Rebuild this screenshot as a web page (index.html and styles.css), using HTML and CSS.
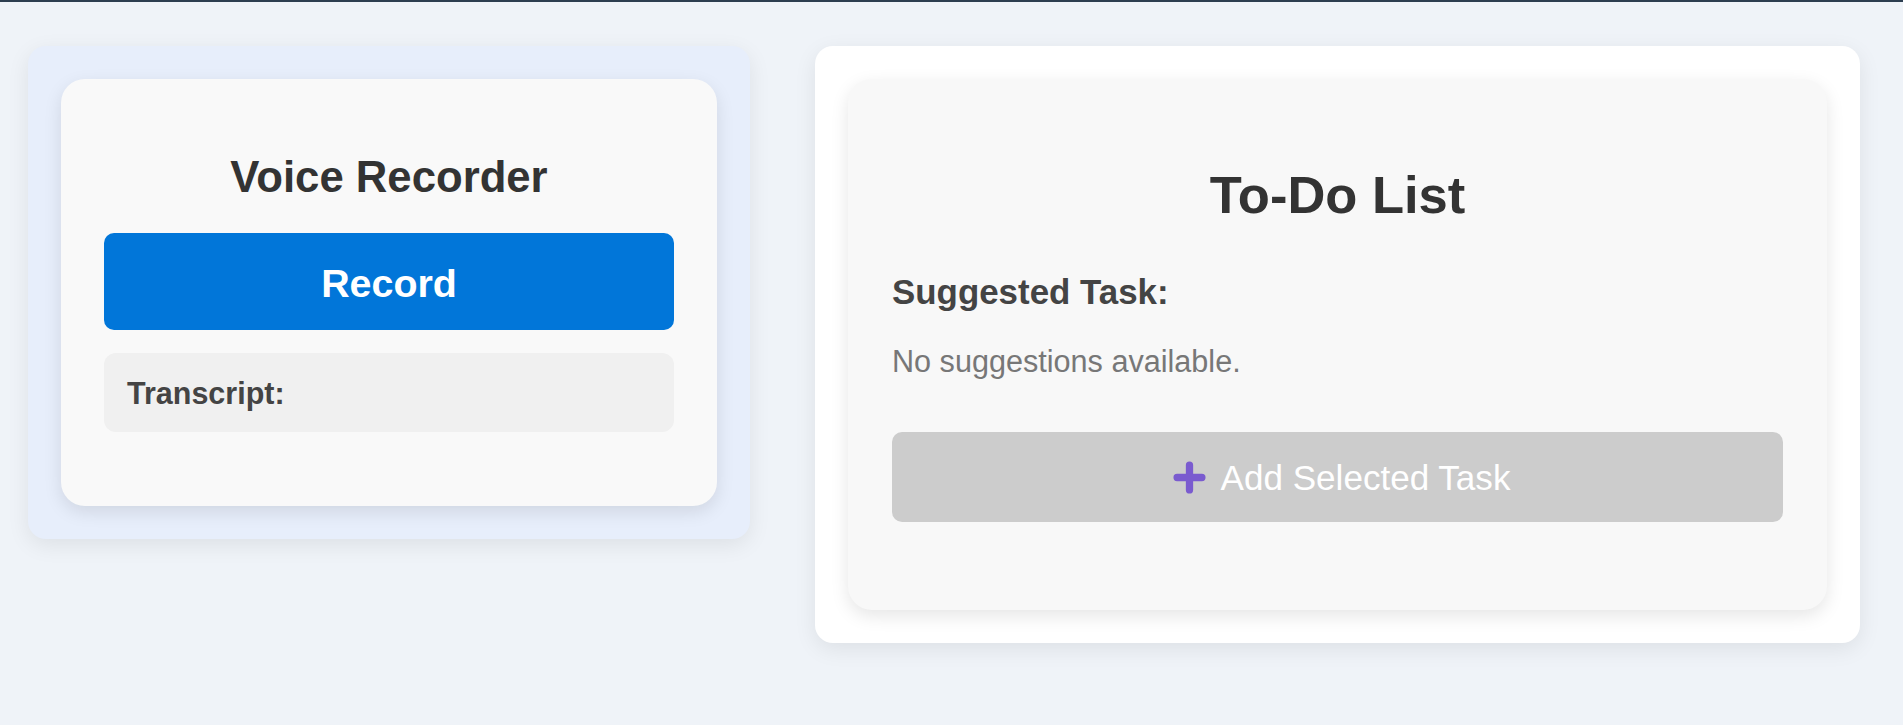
FILE: index.html
```html
<!DOCTYPE html>
<html lang="en">
<head>
<meta charset="utf-8">
<title>Voice Recorder &amp; To-Do List</title>
<link rel="stylesheet" href="styles.css">
</head>
<body>
<div class="topbar"></div>
<main class="main">
  <section class="panel panel-recorder">
    <div class="card">
      <h2 class="card-title">Voice Recorder</h2>
      <button class="btn-record" type="button">Record</button>
      <div class="transcript"><strong>Transcript:</strong></div>
    </div>
  </section>
  <section class="panel panel-todo">
    <div class="card card-todo">
      <h2 class="todo-title">To-Do List</h2>
      <h3 class="suggest-title">Suggested Task:</h3>
      <p class="suggest-empty">No suggestions available.</p>
      <button class="btn-add" type="button" disabled>
        <svg class="plus" viewBox="0 0 24 24" width="35" height="35" aria-hidden="true"><path d="M12 3.5v17M3.5 12h17" fill="none" stroke="#7a5bcf" stroke-width="5" stroke-linecap="round"/></svg>
        <span>Add Selected Task</span>
      </button>
    </div>
  </section>
</main>
</body>
</html>
```

FILE: styles.css
```css
* { box-sizing: border-box; }

body {
  margin: 0;
  background: #eff3f8;
  font-family: "Liberation Sans", Arial, sans-serif;
  color: #333;
  min-height: 725px;
}

.topbar {
  height: 2px;
  background: #2c3e50;
}

.main {
  display: grid;
  grid-template-columns: 722px 1045px;
  column-gap: 65px;
  align-items: start;
  padding: 44px 0 0 28px;
}

.panel {
  padding: 33px;
  border-radius: 18px;
  box-shadow: 0 6px 22px rgba(0, 0, 0, 0.08);
}

.panel-recorder { background: #e7eefb; }
.panel-todo { background: #ffffff; }

.card {
  background: #f9f9f9;
  border-radius: 24px;
  padding: 43px;
  box-shadow: 0 6px 18px rgba(0, 0, 0, 0.1);
  display: flex;
  flex-direction: column;
}

.card-title {
  margin: 30px 0 31px;
  font-size: 43.7px;
  font-weight: bold;
  text-align: center;
  color: #333;
  line-height: normal;
}

.btn-record {
  height: 97px;
  padding: 4px 0 0;
  border: none;
  border-radius: 10px;
  background: #0176d9;
  color: #fff;
  font-family: inherit;
  font-size: 39.4px;
  font-weight: bold;
  display: flex;
  align-items: center;
  justify-content: center;
}

.transcript {
  margin: 23px 0 31px;
  height: 79px;
  padding: 2px 23px 0;
  background: #f0f0f0;
  border-radius: 12px;
  display: flex;
  align-items: center;
  font-size: 30.5px;
  color: #444;
}

.card-todo {
  background: #f8f8f8;
  padding: 44px;
}

.todo-title {
  margin: 40.5px 0 47px;
  font-size: 52.5px;
  font-weight: bold;
  text-align: center;
  color: #333;
  line-height: normal;
}

.suggest-title {
  margin: 0 0 32px;
  font-size: 34.9px;
  font-weight: bold;
  color: #444;
  line-height: normal;
}

.suggest-empty {
  margin: 0 0 53px;
  font-size: 30.6px;
  color: #777;
  line-height: normal;
}

.btn-add {
  height: 90px;
  margin-bottom: 44px;
  padding: 3px 0 0 7px;
  border: none;
  border-radius: 10px;
  background: #cccccc;
  color: #fff;
  font-family: inherit;
  font-size: 35.1px;
  display: flex;
  align-items: center;
  justify-content: center;
  gap: 14px;
}

.plus { display: block; margin-top: -2px; }
```
